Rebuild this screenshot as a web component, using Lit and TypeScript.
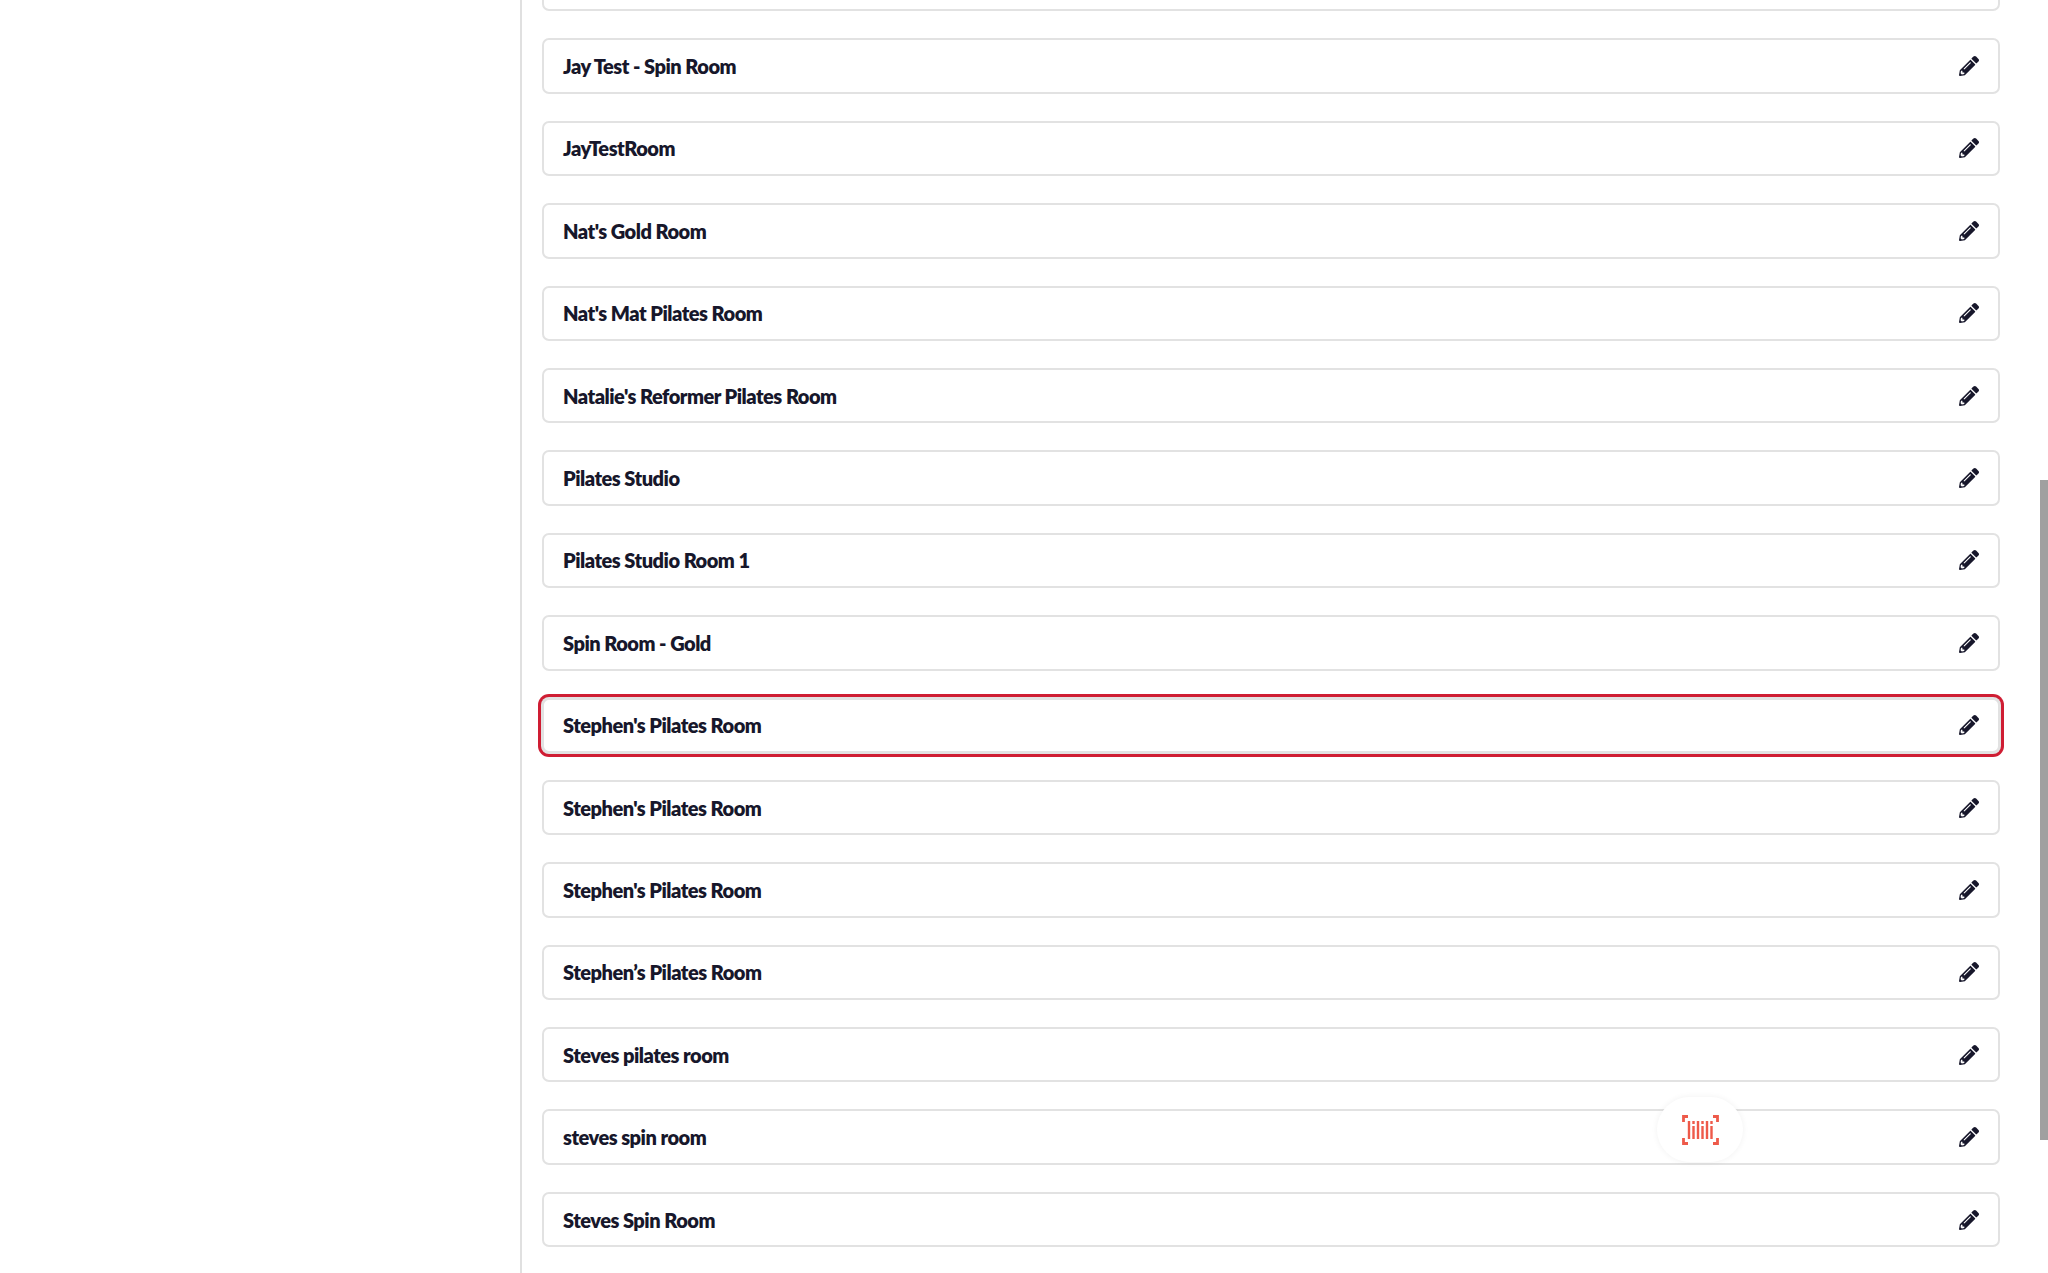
import { LitElement, html, css, svg } from "lit";
import { customElement } from "lit/decorators.js";

const ROOMS: [string, boolean?][] = [
  [""],
  ["Jay Test - Spin Room"],
  ["JayTestRoom"],
  ["Nat's Gold Room"],
  ["Nat's Mat Pilates Room"],
  ["Natalie's Reformer Pilates Room"],
  ["Pilates Studio"],
  ["Pilates Studio Room 1"],
  ["Spin Room - Gold"],
  ["Stephen's Pilates Room", true],
  ["Stephen's Pilates Room"],
  ["Stephen's Pilates Room"],
  ["Stephen’s Pilates Room"],
  ["Steves pilates room"],
  ["steves spin room"],
  ["Steves Spin Room"],
];

const PENCIL = svg`<path d="M497.9 142.1l-46.1 46.1c-4.7 4.7-12.3 4.7-17 0l-111-111c-4.7-4.7-4.7-12.3 0-17l46.1-46.1c18.7-18.7 49.1-18.7 67.9 0l60.1 60.1c18.8 18.7 18.8 49.1 0 67.9zM284.2 99.8L21.6 362.4.4 483.9c-2.9 16.4 11.4 30.6 27.8 27.8l121.5-21.3 262.6-262.6c4.7-4.7 4.7-12.3 0-17l-111-111c-4.8-4.7-12.4-4.7-17.1 0zM124.1 339.9c-5.5-5.5-5.5-14.3 0-19.8l154-154c5.5-5.5 14.3-5.5 19.8 0s5.5 14.3 0 19.8l-154 154c-5.5 5.5-14.3 5.5-19.8 0zM88 424h48v36.3l-64.5 11.3-31.1-31.1L51.7 376H88v48z"/>`;

@customElement("app-root")
export class AppRoot extends LitElement {
  static styles = css`
    :host {
      display: flex;
      position: relative;
      height: 1273px;
      overflow: hidden;
      background: #fff;
      font-family: Lato, "Liberation Sans", sans-serif;
      color: #17172b;
    }
    .side {
      flex: 0 0 520px;
      border-right: 2px solid #e0e0e0;
    }
    .list {
      flex: 1;
      display: flex;
      flex-direction: column;
      gap: 27px;
      margin-top: -44px;
      padding: 0 48px 0 20px;
      min-width: 0;
    }
    .row {
      flex: 0 0 55.4px;
      box-sizing: border-box;
      display: flex;
      align-items: center;
      justify-content: space-between;
      padding: 0 19px;
      border: 2px solid #e2e2e2;
      border-radius: 7px;
      background: #fff;
    }
    .row.sel {
      box-shadow: 0 0 0 1px #e2e2e2, 0 0 0 4px #cf1d33;
    }
    .name {
      font-size: 20px;
      font-weight: 800;
      letter-spacing: -0.5px;
    }
    .pencil {
      width: 20px;
      height: 20px;
      fill: #17172b;
      display: block;
    }
    .thumb {
      position: absolute;
      right: 0;
      top: 480px;
      width: 8px;
      height: 660px;
      background: #a0a0a0;
    }
    .fab {
      position: absolute;
      left: 1657px;
      top: 1097px;
      width: 86px;
      height: 65px;
      border-radius: 33px;
      background: #fff;
      box-shadow: 0 0 6px rgba(0, 0, 0, 0.06);
      display: flex;
      align-items: center;
      justify-content: center;
    }
    .fab svg {
      width: 37px;
      height: 30px;
      display: block;
      fill: none;
      stroke: #ee5a4a;
      stroke-width: 2.4;
    }
  `;

  render() {
    return html`
      <div class="side"></div>
      <div class="list">
        ${ROOMS.map(
          ([name, sel]) => html`
            <div class="row ${sel ? "sel" : ""}">
              <span class="name">${name}</span>
              <svg class="pencil" viewBox="0 0 512 512">${PENCIL}</svg>
            </div>
          `
        )}
      </div>
      <div class="thumb"></div>
      <div class="fab">
        <svg viewBox="0 0 37 30">
          <path d="M6 1.5H1.5V7M31 1.5h4.5V7M6 28.5H1.5V23M31 28.5h4.5V23" stroke-width="2.8" />
          <path d="M7 6v18M11.5 11v13M11.5 6v3M16 6v18M20.5 11v13M20.5 6v3M25 6v18M29.5 11v13M29.5 6v3" />
        </svg>
      </div>
    `;
  }
}
